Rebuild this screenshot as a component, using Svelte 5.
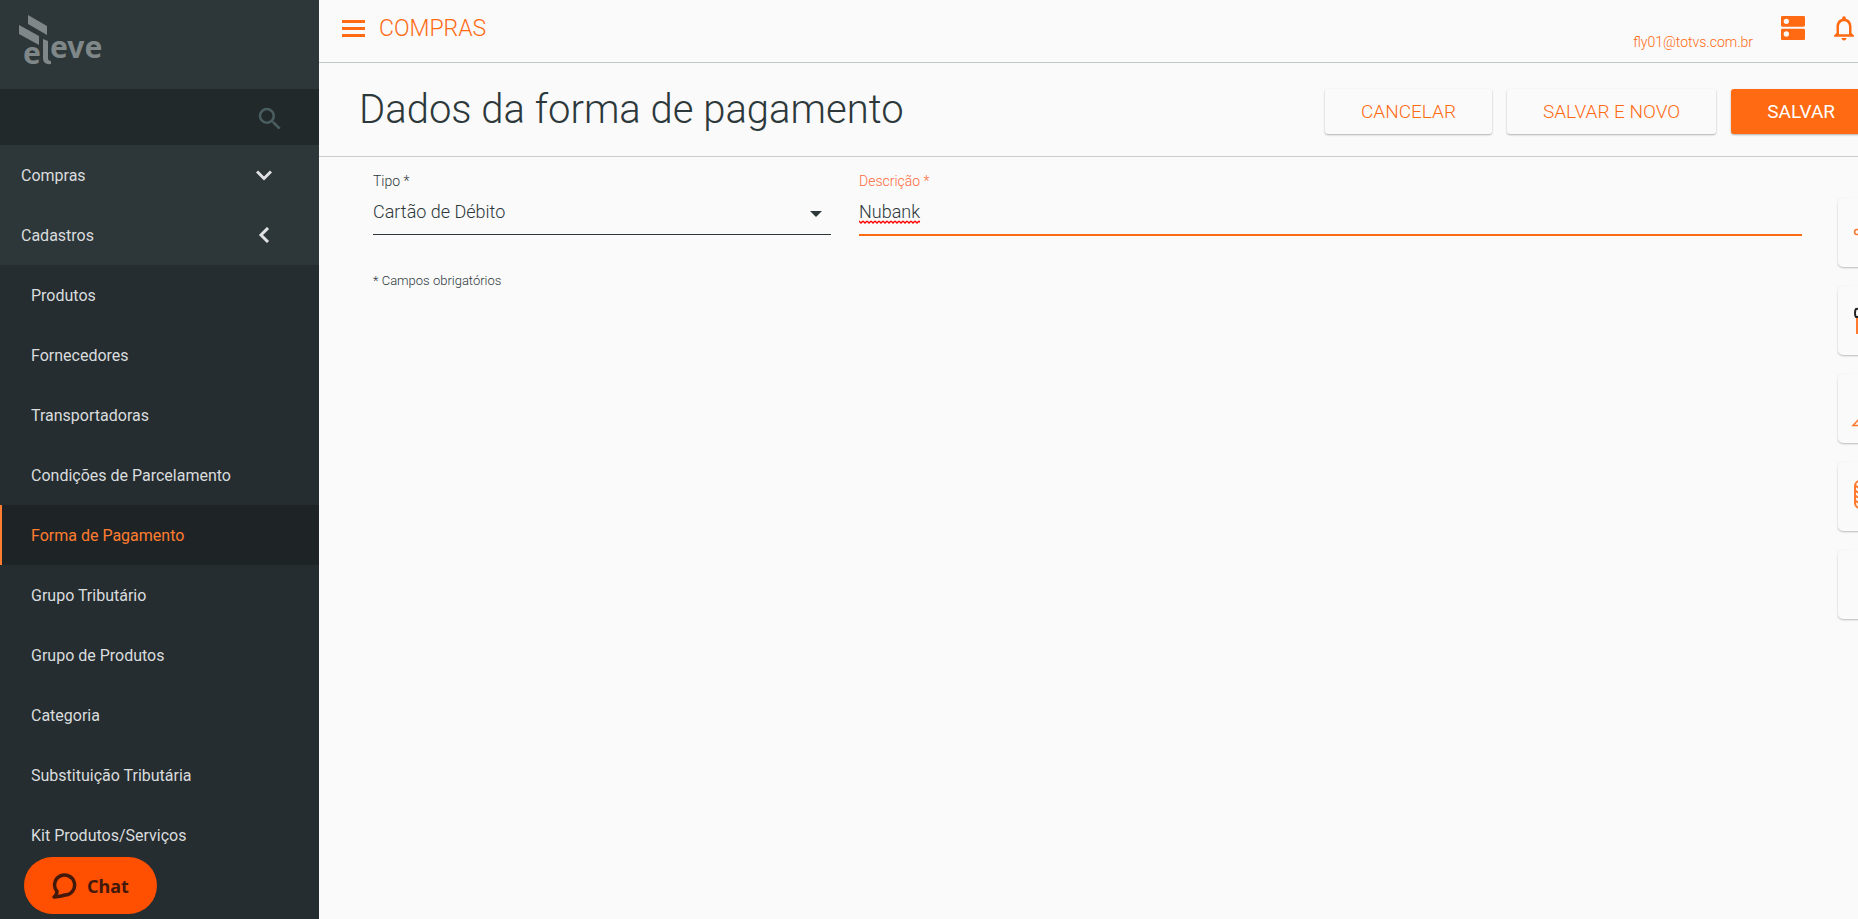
<script lang="ts">
  const groups = [
    { label: 'Compras', open: true },
    { label: 'Cadastros', open: false }
  ];
  const items = [
    'Produtos',
    'Fornecedores',
    'Transportadoras',
    'Condições de Parcelamento',
    'Forma de Pagamento',
    'Grupo Tributário',
    'Grupo de Produtos',
    'Categoria',
    'Substituição Tributária',
    'Kit Produtos/Serviços',
    'Centro de Custos'
  ];
  const shortcuts = ['estoque', 'loja', 'vendas', 'moedas', 'outros'];

  let active = $state('Forma de Pagamento');
  let search = $state('');
  let tipo = $state('Cartão de Débito');
  let descricao = $state('Nubank');
</script>

<div class="shell">
  <aside>
    <a class="logo" href="#inicio" aria-label="eleve">
      <svg width="90" height="60" viewBox="0 0 90 60" fill="#7f8788">
        <path d="M9 0l19 11v9L9 9zM0 10l20 11v9L0 19z" />
        <path d="M24 24l5 2v17q0 3 3 3v3q-8 1-8-6z" />
        <g class="mark">
          <text x="4" y="49">e</text>
          <text x="31" y="43">eve</text>
        </g>
      </svg>
    </a>

    <div class="search">
      <input type="text" bind:value={search} aria-label="Pesquisar" />
      <button type="button" aria-label="Buscar">
        <svg width="30" height="30" viewBox="0 0 24 24" fill="#4a5d61">
          <path d="M15.5 14h-.79l-.28-.27A6.47 6.47 0 0 0 16 9.5 6.5 6.5 0 1 0 9.5 16c1.61 0 3.09-.59 4.23-1.57l.27.28v.79l5 4.99L20.49 19zm-6 0a4.5 4.5 0 1 1 0-9 4.5 4.5 0 0 1 0 9z" />
        </svg>
      </button>
    </div>

    <nav>
      {#each groups as g (g.label)}
        <button type="button" class="group">
          <span>{g.label}</span>
          <svg width="16" height="16" viewBox="0 0 16 16" fill="none" stroke="#e0e2e4" stroke-width="3">
            <path d={g.open ? 'M1 4.500l7 7 7-7' : 'M12 1L5 8l7 7'} />
          </svg>
        </button>
      {/each}
      <div class="sub">
        {#each items as item (item)}
          <a href="#menu" class:active={item === active} onclick={() => (active = item)}>{item}</a>
        {/each}
      </div>
    </nav>
  </aside>

  <div class="page">
    <header class="topbar">
      <button type="button" aria-label="Menu">
        <svg width="23" height="17" viewBox="0 0 23 17" fill="#ff6a13"><path d="M0 0h23v3H0zM0 7h23v3H0zM0 14h23v3H0z" /></svg>
      </button>
      <span class="module">COMPRAS</span>
      <a class="user" href="#conta">fly01@totvs.com.br</a>
      <button type="button" aria-label="Aplicativos">
        <svg width="32" height="32" viewBox="0 0 24 24" fill="#ff6a13">
          <path d="M20 12.500H4c-.55 0-1 .45-1 1v6.500c0 .55.45 1 1 1h16c.55 0 1-.45 1-1v-6.500c0-.55-.45-1-1-1zM7 18.500a2 2 0 1 1 0-4 2 2 0 0 1 0 4zM20 3H4c-.55 0-1 .45-1 1v6c0 .55.45 1 1 1h16c.55 0 1-.45 1-1V4c0-.55-.45-1-1-1zM7 9a2 2 0 1 1 0-4 2 2 0 0 1 0 4z" />
        </svg>
      </button>
      <button type="button" class="bell" aria-label="Notificações">
        <svg width="30" height="30" viewBox="0 0 24 24" fill="#ff6a13">
          <path d="M12 22c1.100 0 2-.9 2-2h-4c0 1.100.9 2 2 2zm6-6v-5c0-3.070-1.630-5.640-4.500-6.320V4a1.500 1.500 0 0 0-3 0v.68C7.640 5.360 6 7.920 6 11v5l-2 2v1h16v-1zm-2 1H8v-6c0-2.480 1.510-4.500 4-4.500s4 2.020 4 4.500z" />
        </svg>
      </button>
    </header>

    <div class="heading">
      <h1>Dados da forma de pagamento</h1>
      <div class="actions">
        <button type="button">CANCELAR</button>
        <button type="button">SALVAR E NOVO</button>
        <button type="submit" form="pagamento" class="primary">SALVAR</button>
      </div>
    </div>

    <div class="content">
      <form id="pagamento" onsubmit={(e) => e.preventDefault()}>
        <div class="field">
          <label for="tipo">Tipo *</label>
          <div class="select">
            <select id="tipo" bind:value={tipo}>
              <option>Cartão de Débito</option>
              <option>Cartão de Crédito</option>
              <option>Dinheiro</option>
            </select>
            <svg width="12" height="6" viewBox="0 0 12 6" fill="#2d383a"><path d="M0 0h12L6 6z" /></svg>
          </div>
        </div>
        <div class="field focus">
          <label for="descricao">Descrição *</label>
          <div class="text">
            <input id="descricao" type="text" bind:value={descricao} spellcheck="false" />
            <svg class="wave" width="61" height="4" aria-hidden="true">
              <defs><pattern id="zig" width="4" height="4" patternUnits="userSpaceOnUse"><path d="M0 1l2 2 2-2" fill="none" stroke="#f00" stroke-width="1.300" /></pattern></defs>
              <rect width="61" height="4" fill="url(#zig)" />
            </svg>
          </div>
        </div>
        <p>* Campos obrigatórios</p>
      </form>

      <div class="shortcuts">
        {#each shortcuts as s (s)}
          <button type="button" aria-label={s}>
            <svg width="40" height="40" viewBox="0 0 40 40" fill="none" stroke="#ff7a2e" stroke-width="1.500">
              {#if s === 'estoque'}
                <circle cx="6" cy="19" r="2.500" /><path d="M8.500 19h20" />
              {:else if s === 'loja'}
                <path d="M6 16v16h28V16" stroke-width="2" />
                <path d="M5 8l30-2q2 1 2 5t-2 5H5q-1-1-1-4t1-4z" stroke="#222" stroke-width="2" />
              {:else if s === 'vendas'}
                <path d="M2 36.500L20 17l18 19.500z" />
              {:else if s === 'moedas'}
                <rect x="4" y="4" width="22" height="27" rx="5" stroke-width="2" />
                <path d="M4 8q3 4 11 4t11-4M4 13q3 4 11 4t11-4M4 18q3 4 11 4t11-4M4 23q3 4 11 4t11-4" stroke-width="2" />
              {/if}
            </svg>
          </button>
        {/each}
      </div>
    </div>
  </div>

  <button type="button" class="chat">
    <svg width="25" height="26" viewBox="0 0 25 26" fill="none" stroke="#43190c" stroke-width="3.500" stroke-linejoin="round">
      <path d="M5 18.500A10 10 0 1 1 13 22q-4 1.500-11 2 3-2.500 3-5.500z" />
    </svg>
    Chat
  </button>
</div>

<style>
  :global(body) { margin: 0; background: #fafafa; }
  :global(*) { box-sizing: border-box; }

  .shell {
    display: flex; height: 100vh; overflow: hidden;
    font-family: Roboto, 'Open Sans', sans-serif; color: #2d383a;
  }
  button, input, select { font: inherit; color: inherit; background: none; border: 0; padding: 0; border-radius: 0; }
  button { cursor: pointer; }
  a { color: inherit; text-decoration: none; }
  svg { display: block; flex: none; }

  aside { flex: none; width: 319px; background: #252d30; overflow: hidden; color: #dadcde; font-size: 16px; }
  .logo { display: block; height: 89px; padding: 15px 19px; background: #2d3739; }
  .mark { font: 700 30px 'Noto Sans', sans-serif; }
  .search { display: flex; align-items: center; height: 56px; padding: 4px 34px 0 21px; background: #22292b; }
  .search input { flex: 1; min-width: 0; outline: 0; }
  .group {
    display: flex; align-items: center; justify-content: space-between;
    width: 100%; height: 60px; padding: 0 47px 0 21px; background: #2d3739;
  }
  .sub a { display: flex; align-items: center; height: 60px; padding-left: 31px; }
  .sub a.active { padding-left: 29px; border-left: 2px solid #ff7c30; background: #1e2426; color: #ff7c30; }

  /* the page is wider than the visible area and runs off to the right */
  .page { flex: 1; min-width: 0; margin-right: -62px; }
  .topbar { display: flex; align-items: center; height: 63px; padding: 0 61px 6px 23px; border-bottom: 1px solid #c3c9ca; color: #ff6a13; }
  .module { margin-left: 14px; font-size: 23px; font-weight: 300; }
  .user { margin: 28px 24px 0 auto; font-size: 14px; font-weight: 300; }
  .bell { margin-left: 20px; }

  .heading {
    display: flex; align-items: center; justify-content: space-between;
    height: 94px; padding: 4px 49px 0 40px; border-bottom: 1px solid #c9cccd;
  }
  h1 { margin: 0 0 4px; font-size: 40px; font-weight: 300; }
  .actions { display: flex; gap: 15px; }
  .actions button {
    height: 45px; padding: 0 36px; border-radius: 3px; color: #ff6a13;
    font-size: 19px; font-weight: 300; box-shadow: 0 1px 2px rgba(0, 0, 0, 0.3);
  }
  .actions .primary { background: #ff6a13; color: #fff; font-weight: 400; }

  .content { display: flex; }
  form { flex: 1; display: grid; grid-template-columns: 458px 1fr; gap: 0 28px; align-content: start; padding: 16px 36px 0 54px; }
  .field { font-weight: 300; }
  label { display: block; height: 16px; font-size: 14px; line-height: 16px; }
  .focus label { color: #ff6a3c; }
  .select, .text { position: relative; height: 46px; border-bottom: 1px solid #2d383a; }
  .text { height: 47px; border-bottom: 2px solid #ff6a13; }
  select, .text input { width: 100%; height: 45px; font-size: 18px; font-weight: 300; outline: 0; appearance: none; }
  .select svg { position: absolute; right: 9px; top: 22px; pointer-events: none; }
  .wave { position: absolute; left: 0; top: 31px; }
  p { grid-column: 1 / -1; margin: 36px 0 0; font-size: 13px; line-height: 18px; font-weight: 300; }

  .shortcuts { flex: none; display: flex; flex-direction: column; gap: 19px; width: 82px; padding: 41px 2px 0 0; }
  .shortcuts button {
    display: flex; align-items: center; height: 69px; padding-left: 13px;
    border-radius: 5px; box-shadow: 0 1px 2px rgba(0, 0, 0, 0.25);
  }

  .chat {
    position: fixed; left: 24px; bottom: 5px; display: flex; align-items: center; gap: 10px;
    height: 57px; padding: 0 28px; border-radius: 29px; background: #ff4f00; color: #43190c;
    font: 700 18px 'Noto Sans', sans-serif;
  }
</style>
